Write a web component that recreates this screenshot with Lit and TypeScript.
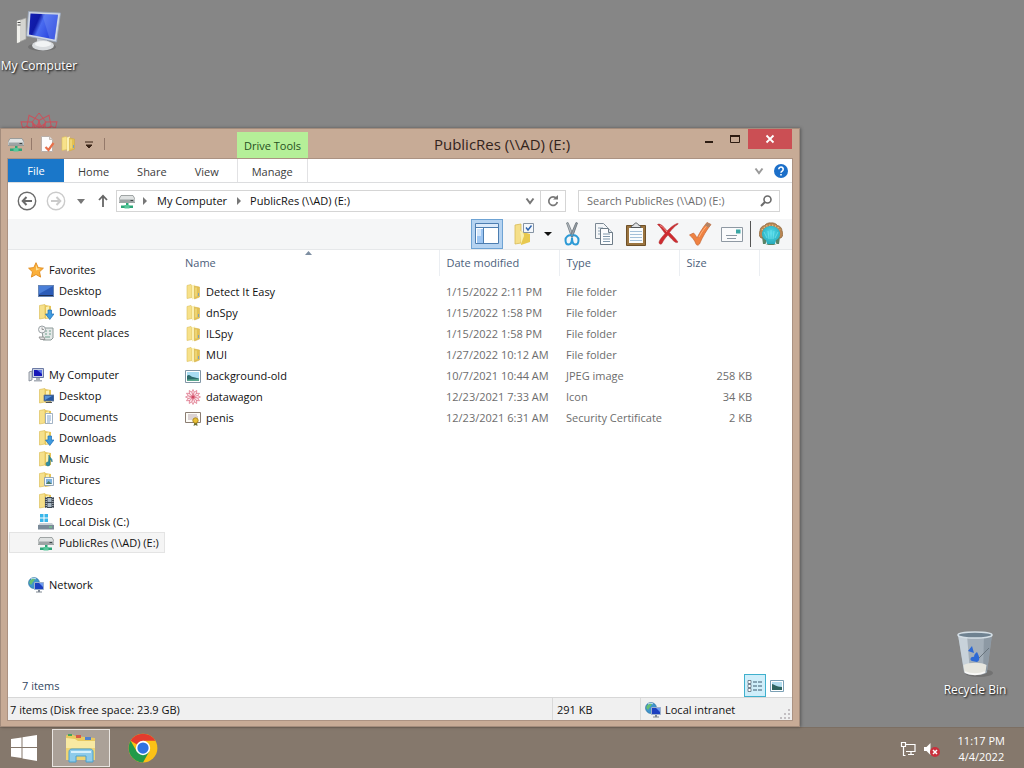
import { LitElement, html, svg, css, TemplateResult } from 'lit';
import { customElement, property, state } from 'lit/decorators.js';
import { classMap } from 'lit/directives/class-map.js';

interface TreeItem {
  label: string;
  icon: string;
  children?: TreeItem[];
}

interface FileEntry {
  name: string;
  icon: string;
  modified: string;
  type: string;
  size?: string;
}

const TREE: TreeItem[] = [
  {
    label: 'Favorites',
    icon: 'star',
    children: [
      { label: 'Desktop', icon: 'screen' },
      { label: 'Downloads', icon: 'downloads' },
      { label: 'Recent places', icon: 'recent' },
    ],
  },
  {
    label: 'My Computer',
    icon: 'pc',
    children: [
      { label: 'Desktop', icon: 'folder-desktop' },
      { label: 'Documents', icon: 'documents' },
      { label: 'Downloads', icon: 'downloads' },
      { label: 'Music', icon: 'music' },
      { label: 'Pictures', icon: 'pictures' },
      { label: 'Videos', icon: 'videos' },
      { label: 'Local Disk (C:)', icon: 'disk' },
      { label: 'PublicRes (\\\\AD) (E:)', icon: 'netdrive' },
    ],
  },
  { label: 'Network', icon: 'network' },
];

const FILES: FileEntry[] = [
  { name: 'Detect It Easy', icon: 'folder', modified: '1/15/2022 2:11 PM', type: 'File folder' },
  { name: 'dnSpy', icon: 'folder', modified: '1/15/2022 1:58 PM', type: 'File folder' },
  { name: 'ILSpy', icon: 'folder', modified: '1/15/2022 1:58 PM', type: 'File folder' },
  { name: 'MUI', icon: 'folder', modified: '1/27/2022 10:12 AM', type: 'File folder' },
  { name: 'background-old', icon: 'image', modified: '10/7/2021 10:44 AM', type: 'JPEG image', size: '258 KB' },
  { name: 'datawagon', icon: 'rosette', modified: '12/23/2021 7:33 AM', type: 'Icon', size: '34 KB' },
  { name: 'penis', icon: 'certificate', modified: '12/23/2021 6:31 AM', type: 'Security Certificate', size: '2 KB' },
];

const smallFolder = svg`
  <path d="M1.500 1.500l5.500-1v13.500l-5.500 1z" fill="#f6e08a" stroke="#d9b84e" stroke-width=".6"/>
  <path d="M7 1l6 1v12l-6 1z" fill="#e6c458"/>
  <path d="M8 3l3-.8v11l-3 .8z" fill="#fbf0b0"/>`;

const petals = (n: number, w: number, h: number) =>
  Array.from({ length: n }, (_, i) => svg`
    <path d="M0 0L${w} ${-h * 0.6}L0 ${-h}L${-w} ${-h * 0.6}z" transform="rotate(${(i * 360) / n})"/>`);

const ICONS: Record<string, TemplateResult> = {
  folder: svg`
    <path d="M2 1.500l4-1 1 1v12l-5 1z" fill="#f7e18a" stroke="#dcbf5c" stroke-width=".6"/>
    <path d="M7 1.500l3-1v13.500l-3 1.500z" fill="#fbf0b4"/>
    <path d="M9.500 2l5 1v10l-5 2z" fill="#e3c153" stroke="#cfa93c" stroke-width=".5"/>
    <path d="M11 3.500v9" stroke="#f7e795"/>
    <path d="M13.500 9v3" stroke="#7aa0c0"/>`,
  star: svg`
    <path d="M8 .7l2.200 4.900 5.200.6-3.900 3.600 1.100 5.300L8 12.500l-4.600 2.600 1.100-5.300L.6 6.200l5.200-.6z" fill="#fbb03b" stroke="#e08a1c" stroke-width=".9"/>
    <path d="M8 3l1.400 3.400 3.100.4L8 8.500z" fill="#ffe39a"/>`,
  screen: svg`
    <path d="M0 2h16v12H0z" fill="#6685b5"/>
    <path d="M1 3h14v9H1z" fill="#2c5cb8"/>
    <path d="M1 3h14L1 11z" fill="#4a7fd8"/>
    <path d="M1 12.500h14" stroke="#1d2f55"/>`,
  downloads: svg`${smallFolder}
    <path d="M10 6h3.500v4H16l-4.200 5.500L7.500 10H10z" fill="#3f9be0" stroke="#1d6db4" stroke-width=".7"/>`,
  recent: svg`
    <path d="M4 3h11v10l-2 2H5z" fill="#e4e9e8" stroke="#8e9a98"/>
    <path d="M7 6h2m2 0h2M7 9h2m2 0h2M7 12h5" stroke="#6fa08c"/>
    <circle cx="4" cy="4.500" r="3.500" fill="#f4f4f4" stroke="#9aa1a4"/>
    <path d="M4 2.500v2h2M1 12h5l1 2.500H2.500z" stroke="#888" fill="#dcdcdc" stroke-width=".8"/>`,
  pc: svg`
    <path d="M1 5l3-1v9l-3 1z" fill="#d7dbe0" stroke="#7b8490" stroke-width=".8"/>
    <path d="M4.500 1.500h11v9h-11z" fill="#c9d1e4" stroke="#6d7ba5"/>
    <path d="M6 3h8v6H6z" fill="#1717b8"/>
    <path d="M9 3h5v4z" fill="#5a73e8"/>
    <path d="M8 11h4v2h2v1.500H6V13h2z" fill="#a9afb8"/>`,
  'folder-desktop': svg`${smallFolder}
    <path d="M6 7h10v6H6z" fill="#27569f" stroke="#6c7f96" stroke-width=".8"/>
    <path d="M7 8h7l-7 4z" fill="#5a93d6"/>
    <path d="M8 14.500h6" stroke="#555"/>`,
  documents: svg`${smallFolder}
    <path d="M7.500 4.500h7v10h-7z" fill="#fff" stroke="#8aa0b6" stroke-width=".8"/>
    <path d="M9 7h4M9 9h4M9 11h4M9 13h3" stroke="#5b8bc0" stroke-width=".8"/>`,
  music: svg`${smallFolder}
    <path d="M11 4c0 3 4 3 3 7-.5-2-1.500-2.500-2-2.500V13a2 2 0 1 1-1.500-2z" fill="#2f8fa5" stroke="#1d6d80" stroke-width=".6"/>`,
  pictures: svg`${smallFolder}
    <path d="M6.500 5.500h9v8h-9z" fill="#f3f8fc" stroke="#7d96ad" stroke-width=".8"/>
    <path d="M8 7h6v5H8z" fill="#7fb3e0"/>
    <path d="M8 12l2.500-3 3.500 3z" fill="#4c7a62"/>`,
  videos: svg`${smallFolder}
    <path d="M7 4h9v11H7z" fill="#3a4450"/>
    <path d="M9.500 5h4v4h-4zM9.500 10h4v4h-4z" fill="#a8b8c4"/>
    <path d="M8.200 4v11M14.900 4v11" stroke="#d9dee2" stroke-dasharray="1 1"/>`,
  disk: svg`
    <path d="M2 0h3.500v3.500H2zM6.500 0H10v3.500H6.500zM2 4.500h3.500V8H2zM6.500 4.500H10V8H6.500z" fill="#38b6ea"/>
    <path d="M2 9h12l2 2.500H0z" fill="#c9d0d6"/>
    <path d="M0 11h16v4.500H0z" fill="#7a8a98"/>
    <path d="M11 13h3" stroke="#6fe08b"/>`,
  netdrive: svg`
    <path d="M2 2.500h12l2 3.500v3.500H0V6z" fill="#dfe2e2" stroke="#8b9292" stroke-width=".8"/>
    <path d="M1 6.500h14v2.500H1z" fill="#9da4a5"/>
    <path d="M11.500 7.500h2.500" stroke="#3c4444"/>
    <path d="M7 10h2.500v2.500H14V15H2v-2.500h5z" fill="#2da678"/>
    <path d="M5.500 12h5v3.500h-5z" fill="#57c79a"/>`,
  network: svg`
    <circle cx="6" cy="6" r="5.500" fill="#3f94cc" stroke="#2a6f9c" stroke-width=".6"/>
    <path d="M2 3.500c2-2 4-2 5-1L5 5 3 8 1.200 6zM7 7l3-2v4L7 11z" fill="#66bf72"/>
    <path d="M3 2c2-1 4-1 5 0" stroke="#cfeaf5" fill="none"/>
    <path d="M6.500 5.500h9v7h-9z" fill="#1c3fc0" stroke="#9db0cc"/>
    <path d="M11 6h4v4z" fill="#6f9cf0"/>
    <path d="M10 13h2v1.500h2v1H8v-1h2z" fill="#7f8792"/>`,
  image: svg`
    <path d="M.5 2.500h15v12H.5z" fill="#fff" stroke="#8296a6"/>
    <path d="M2 4h12v9H2z" fill="#a9dcf2"/>
    <path d="M2 8c2-3 4 1 6 1l6 1.500V13H2z" fill="#2d6b6c"/>
    <path d="M2 11.500l12-.5v2H2z" fill="#5aa78e"/>`,
  rosette: svg`
    <g transform="translate(8 8)" fill="#fbe3e8" stroke="#d9637b" stroke-width=".6">${petals(12, 1.5, 7.5)}</g>
    <circle cx="8" cy="8" r="1.500" fill="#d24762"/>`,
  certificate: svg`
    <path d="M.5 2.500h15v10H.5z" fill="#fdfcf7" stroke="#8b7d72"/>
    <path d="M3 5h9M3 7h10M3 9h5" stroke="#b9a9b0"/>
    <path d="M9.500 12l-1 4 2-1 2 1-.5-4z" fill="#6a6e38"/>
    <circle cx="10.500" cy="10.500" r="2.700" fill="#e9bf35" stroke="#9c7b1a" stroke-width=".8"/>`,
  page: svg`
    <path d="M2.500.5h8l3 3v12h-11z" fill="#fdfdfd" stroke="#b9b0aa"/>
    <path d="M10.500.5v3h3" fill="#e6e2df" stroke="#b9b0aa" stroke-width=".8"/>
    <path d="M6.500 11l3 3 5-7" stroke="#e8704a" stroke-width="2.200" fill="none"/>`,
};

const icon = (name: string) => html`
  <svg class="icon" viewBox="0 0 16 16" width="16" height="16" aria-hidden="true">${ICONS[name]}</svg>`;

// toolbar glyphs, drawn on a 24px grid
const TOOLS: { label: string; art: TemplateResult }[] = [
  {
    label: 'Cut',
    art: svg`
      <path d="M6.500 1l1.500-.5 5.500 13-2 1.500z" fill="#b9c0c7" stroke="#70787f" stroke-width=".8"/>
      <path d="M17.500 1L16 .5l-5.500 13 2 1.500z" fill="#98a1a8" stroke="#646c73" stroke-width=".8"/>
      <path d="M11.500 13.500c-3-1-6 1.500-6 4.500s1.500 4.500 3 4.500c2.500 0 3.500-4 3.500-7 0 3 1 7 3.500 7 1.500 0 3-1.500 3-4.500s-3-5.500-6-4.500" fill="none" stroke="#2c9ad6" stroke-width="2"/>`,
  },
  {
    label: 'Copy',
    art: svg`
      <path d="M3.500 1.500h8l4 4v11h-12z" fill="#f4f6f8" stroke="#7b8894"/>
      <path d="M6 6h5M6 9h5M6 12h5" stroke="#8fa3b4"/>
      <path d="M8.500 6.500h8l4 4v12h-12z" fill="#fcfdfe" stroke="#6d7b87"/>
      <path d="M16.500 6.500v4h4" fill="#dde4ea" stroke="#6d7b87"/>
      <path d="M11 12h7M11 14.500h7M11 17h7M11 19.500h7" stroke="#7f97ab"/>`,
  },
  {
    label: 'Paste',
    art: svg`
      <path d="M2.500 3.500h19v20h-19z" fill="#9a7440" stroke="#6e5028"/>
      <path d="M5 6h14v15H5z" fill="#fafcfd"/>
      <path d="M6 9.500h12M6 12.500h12M6 15.500h12M6 18.500h12" stroke="#a4c0d8"/>
      <path d="M7 5.500c0-2 2-2 3-3 .5-2 3.500-2 4 0 1 1 3 1 3 3z" fill="#dfe1e3" stroke="#53575a"/>`,
  },
  {
    label: 'Delete',
    art: svg`
      <path d="M1.500 2.500c2-1.500 5.500 1 9.500 6.500 3-3 6-6 10-7.500 1.500-.3 1.500.4.5 1-3 2-5.500 4.500-8 8 3 3 5.500 5.500 8.500 9.500-1.500 1.500-3.500.5-10-7-3 3-4.500 5.500-6 8.500-1 1.500-3.500.5-3-1.500 1-3 3.500-5.500 6-8.500C6.500 8 4.500 5 1.500 2.500z" fill="#cf2b30" stroke="#a8383b" stroke-width=".5"/>
      <path d="M4 3.500c3 1 5 4 7 6.500" stroke="#ee9089" fill="none"/>`,
  },
  {
    label: 'Properties',
    art: svg`
      <path d="M1.500 13l4-2c2 2 2.500 3 3.500 5C12 10 15.500 4.500 19 .5l4 2C18.500 8 14.500 15 11.500 22c-1 1.500-3 1.500-3.500 0-1.500-4-3.500-6.500-6.500-9z" fill="#ef8242" stroke="#c4683a" stroke-width=".7"/>
      <path d="M11 15c3-6 6-9 9-12.500" stroke="#ffb27c" fill="none"/>
      <path d="M17 3.500l2-3 4 2-2.500 3z" fill="#b08468"/>`,
  },
  {
    label: 'Rename',
    art: svg`
      <path d="M1.500 5.500h21v14h-21z" fill="#fafbfc" stroke="#8f99a3"/>
      <path d="M16 7.500h4.500v4H16z" fill="#3aa6a4"/>
      <path d="M6 13.500h11M7 16.500h9" stroke="#8b97a3"/>`,
  },
];

const chevron = html`
  <svg width="10" height="8" viewBox="0 0 10 8" aria-hidden="true">
    <path d="M1.500 1.500L5 6l3.500-4.500" fill="none" stroke="currentColor" stroke-width="2"/>
  </svg>`;

const shared = css`
  * {
    box-sizing: border-box;
  }

  button {
    display: flex;
    align-items: center;
    justify-content: center;
    padding: 0;
    border: none;
    background: none;
    color: inherit;
    font: inherit;
    cursor: default;
  }

  a {
    color: inherit;
    text-decoration: none;
  }

  svg {
    display: block;
    flex: none;
  }
`;

@customElement('explorer-window')
export class ExplorerWindow extends LitElement {
  static styles = [shared, css`
    :host {
      display: flex;
      flex-direction: column;
      padding: 0 7px 6px;
      border: 1px solid #a38c7c;
      background: #c7ab96;
      box-shadow: 1px 0 3px rgba(0, 0, 0, 0.35);
      color: #111;
    }

    .titlebar {
      display: flex;
      height: 30px;
    }

    .quick {
      display: flex;
      align-items: center;
      flex: none;
      width: 229px;
      gap: 5px;
    }

    .quick .divider {
      width: 1px;
      height: 12px;
      margin: 0 2px;
      background: #94796a;
    }

    .context {
      flex: none;
      width: 71px;
      margin-top: 3px;
      padding-top: 5px;
      background: #b5ef98;
      color: #27501f;
      line-height: 18px;
      text-align: center;
    }

    .title {
      flex: 1;
      margin: 0;
      color: #33241c;
      font-size: 15px;
      font-weight: normal;
      line-height: 30px;
      text-align: center;
    }

    .caption {
      display: flex;
      align-items: flex-start;
    }

    .caption button {
      width: 26px;
      height: 20px;
    }

    .caption .close {
      width: 44px;
      background: #cb4f54;
    }

    .client {
      display: flex;
      flex: 1;
      flex-direction: column;
      min-height: 0;
      outline: 1px solid #ab9282;
      background: #fff;
    }

    .tabs {
      display: flex;
      flex: none;
      height: 24px;
      border-bottom: 1px solid #dcdddf;
      color: #3c3c3c;
    }

    .tab {
      padding: 2px 14px 0;
    }

    .tab.file {
      width: 56px;
      height: 23px;
      padding: 0;
      background: #1a77c9;
      color: #fff;
    }

    .tab.manage {
      width: 71px;
      margin-left: 4px;
      padding: 2px 0 0;
      border: solid #e2e2e4;
      border-width: 0 1px;
    }

    .tabs .fold {
      margin-left: auto;
      margin-right: 10px;
      color: #9a9a9a;
    }

    .tabs .help {
      margin-right: 4px;
    }

    .nav {
      display: flex;
      flex: none;
      align-items: center;
      height: 36px;
      padding: 0 12px 0 9px;
    }

    .nav .history {
      margin-left: 9px;
    }

    .nav .history:first-child {
      margin-left: 0;
    }

    .nav .recent {
      margin: 0 13px 0 11px;
    }

    .address,
    .search {
      display: flex;
      align-items: center;
      height: 22px;
      border: 1px solid #d5d5d5;
    }

    .address {
      flex: 1;
      margin: 0 12px 0 8px;
      padding-left: 2px;
    }

    .address .crumb {
      margin: 0 10px;
      color: #111;
    }

    .address .crumb:last-of-type {
      margin-left: 9px;
    }

    .address .open {
      width: 20px;
      height: 20px;
      margin-left: auto;
      color: #777;
    }

    .address .refresh {
      width: 25px;
      height: 20px;
      border-left: 1px solid #d5d5d5;
    }

    .search {
      width: 202px;
      padding: 0 7px 0 8px;
    }

    .search input {
      flex: 1;
      min-width: 0;
      padding: 0;
      border: none;
      outline: none;
      background: none;
      color: #333;
      font: inherit;
    }

    .search input::placeholder {
      color: #6d6d6d;
      opacity: 1;
    }

    .toolbar {
      display: flex;
      flex: none;
      align-items: flex-end;
      justify-content: flex-end;
      height: 31px;
      padding: 0 5px;
      border-bottom: 1px solid #e6e8ea;
      background: #f5f6f7;
    }

    .toolbar button {
      width: 32px;
      height: 30px;
    }

    .toolbar .pane {
      margin-right: 5px;
      border: 1px solid #6ea3d4;
      background: #b5d3f1;
    }

    .toolbar .more {
      width: 16px;
    }

    .toolbar .divider {
      width: 1px;
      height: 26px;
      margin: 0 4px 2px 2px;
      background: #555;
    }

    .body {
      display: flex;
      flex: 1;
      min-height: 0;
    }

    .tree {
      flex: none;
      width: 157px;
      padding-top: 9px;
      overflow: hidden;
      white-space: nowrap;
    }

    .tree ul {
      margin: 0;
      padding: 0;
      list-style: none;
    }

    .tree .group {
      margin-bottom: 21px;
    }

    .tree a {
      display: flex;
      align-items: center;
      gap: 5px;
      height: 21px;
      margin-left: 1px;
      padding-left: 18px;
      border: 1px solid transparent;
    }

    .tree ul ul a {
      padding-left: 28px;
    }

    .tree a.selected {
      border-color: #e4e4e4;
      background: #f5f5f5;
    }

    .files {
      flex: 1;
      padding-left: 13px;
    }

    table {
      width: 100%;
      border-collapse: collapse;
      table-layout: fixed;
    }

    th,
    td {
      padding: 0 7px;
      color: #6d6d6d;
      font-weight: normal;
      text-align: left;
      white-space: nowrap;
    }

    th {
      position: relative;
      height: 26px;
      border-right: 1px solid #ebeef2;
      color: #4c607a;
    }

    th:last-child {
      border-right: none;
    }

    th .sort {
      position: absolute;
      top: 1px;
      left: calc(50% - 3px);
    }

    thead::after {
      content: '';
      display: block;
      height: 5px;
    }

    td {
      height: 21px;
    }

    td.number {
      text-align: right;
    }

    .name {
      display: flex;
      align-items: center;
      gap: 5px;
      color: #111;
    }

    .col-name {
      width: 261px;
    }

    .col-text {
      width: 120px;
    }

    .col-size {
      width: 80px;
    }

    .details {
      display: flex;
      flex: none;
      align-items: center;
      height: 23px;
      padding: 0 4px 0 14px;
      color: #33475f;
    }

    .details .view {
      width: 22px;
      height: 23px;
    }

    .details .view.on {
      margin-left: auto;
      border: 1px solid #3fb0cd;
      background: #cfeefa;
    }

    .status {
      display: grid;
      flex: none;
      grid-template-columns: 1fr 88px 152px;
      height: 23px;
      border-top: 1px solid #d7d7d7;
      background: #f0f0f0;
    }

    .status div {
      display: flex;
      align-items: center;
      gap: 4px;
      padding: 2px 4px 0;
      border-left: 1px solid #d9d9d9;
    }

    .status div:first-child {
      padding-left: 2px;
      border-left: none;
    }

    .status .grip {
      align-self: flex-end;
      margin: 0 -2px 1px auto;
    }
  `];

  @property()
  heading = '';

  @state()
  private current = 'PublicRes (\\\\AD) (E:)';

  private select(e: Event, item: TreeItem) {
    e.preventDefault();
    this.current = item.label;
  }

  private renderNode(item: TreeItem): TemplateResult {
    return html`
      <li class=${classMap({ group: !!item.children })}>
        <a href="#" class=${classMap({ selected: this.current === item.label })}
           @click=${(e: Event) => this.select(e, item)}>${icon(item.icon)}<span>${item.label}</span></a>
        ${item.children ? html`<ul>${item.children.map(child => this.renderNode(child))}</ul>` : ''}
      </li>`;
  }

  private renderTitlebar() {
    return html`
      <header class="titlebar">
        <div class="quick">
          ${icon('netdrive')}
          <span class="divider"></span>
          <button aria-label="Properties">${icon('page')}</button>
          <button aria-label="New folder">${icon('folder')}</button>
          <button aria-label="Customize Quick Access Toolbar">
            <svg width="16" height="16" viewBox="0 0 16 16">
              <path d="M4 6h8M5 9h6l-3 3z" fill="#3a2417" stroke="#3a2417"/>
            </svg>
          </button>
          <span class="divider"></span>
        </div>
        <div class="context">Drive Tools</div>
        <h1 class="title">${this.heading}</h1>
        <div class="caption">
          <button aria-label="Minimize">
            <svg width="12" height="12" viewBox="0 0 12 12"><path d="M2 8h8v2H2z" fill="#2d1c12"/></svg>
          </button>
          <button aria-label="Maximize">
            <svg width="12" height="12" viewBox="0 0 12 12">
              <path d="M1.500 2.500h9v7h-9z" fill="none" stroke="#2d1c12"/><path d="M1 2h10v2H1z" fill="#2d1c12"/>
            </svg>
          </button>
          <button class="close" aria-label="Close">
            <svg width="10" height="10" viewBox="0 0 10 10">
              <path d="M1.500 1.500l7 7M8.500 1.500l-7 7" stroke="#fff" stroke-width="1.800"/>
            </svg>
          </button>
        </div>
      </header>`;
  }

  private renderRibbon() {
    return html`
      <div class="tabs">
        <button class="tab file">File</button>
        <button class="tab">Home</button>
        <button class="tab">Share</button>
        <button class="tab">View</button>
        <button class="tab manage">Manage</button>
        <button class="fold" aria-label="Expand the Ribbon">${chevron}</button>
        <button class="help" aria-label="Help">
          <svg width="14" height="14" viewBox="0 0 14 14">
            <circle cx="7" cy="7" r="7" fill="#1c6fc9"/>
            <path d="M4.800 5.300a2.200 2.200 0 1 1 3.400 1.800c-.9.600-1.200.9-1.200 1.700M7 10v1.600" fill="none" stroke="#fff" stroke-width="1.600"/>
          </svg>
        </button>
      </div>`;
  }

  private renderNavigation() {
    return html`
      <div class="nav">
        <button class="history" aria-label="Back">
          <svg width="20" height="20" viewBox="0 0 20 20" fill="none" stroke="#6b6b6b">
            <circle cx="10" cy="10" r="8.700" stroke-width="1.400"/>
            <path d="M15 10H6M9.500 6L5.700 10l3.800 4" stroke-width="2"/>
          </svg>
        </button>
        <button class="history" aria-label="Forward">
          <svg width="20" height="20" viewBox="0 0 20 20" fill="none" stroke="#cbcbcb">
            <circle cx="10" cy="10" r="8.700" stroke-width="1.400"/>
            <path d="M5 10h9M10.500 6l3.800 4-3.800 4" stroke-width="2"/>
          </svg>
        </button>
        <button class="recent" aria-label="Recent locations">
          <svg width="8" height="5" viewBox="0 0 8 5"><path d="M0 0h8L4 5z" fill="#777"/></svg>
        </button>
        <button aria-label="Up">
          <svg width="10" height="14" viewBox="0 0 10 14">
            <path d="M5 13V2M1 6l4-4.300L9 6" fill="none" stroke="#666" stroke-width="1.800"/>
          </svg>
        </button>
        <div class="address">
          ${icon('netdrive')}
          <svg width="12" height="8" viewBox="0 0 12 8"><path d="M8 0l4 4-4 4z" fill="#777"/></svg>
          <a class="crumb" href="#">My Computer</a>
          <svg width="4" height="8" viewBox="0 0 4 8"><path d="M0 0l4 4-4 4z" fill="#777"/></svg>
          <a class="crumb" href="#">${this.heading}</a>
          <button class="open" aria-label="Previous locations">${chevron}</button>
          <button class="refresh" aria-label="Refresh">
            <svg width="12" height="12" viewBox="0 0 12 12">
              <path d="M9.500 3.500A4.300 4.300 0 1 0 10.300 7" fill="none" stroke="#777" stroke-width="1.700"/>
              <path d="M6 4.500h5V0z" fill="#777"/>
            </svg>
          </button>
        </div>
        <label class="search">
          <input type="text" aria-label="Search" placeholder="Search ${this.heading}">
          <svg width="12" height="12" viewBox="0 0 12 12">
            <circle cx="7.500" cy="4.500" r="3.500" fill="none" stroke="#6b6b6b" stroke-width="1.600"/>
            <path d="M5 7L1 11" stroke="#6b6b6b" stroke-width="2"/>
          </svg>
        </label>
      </div>`;
  }

  private renderToolbar() {
    return html`
      <div class="toolbar">
        <button class="pane" aria-label="Navigation pane">
          <svg width="24" height="24" viewBox="0 0 24 24">
            <path d="M.5 1.500h23v20H.5z" fill="#fff" stroke="#4c7db0"/>
            <path d="M1 2h22v3H1z" fill="#dceafa"/>
            <path d="M1 5.500h22M8.500 6v15" stroke="#4c7db0"/>
            <path d="M2 7h6v14H2z" fill="#9cc5f2"/>
            <path d="M2 7h4v7H2z" fill="#d4e6fa"/>
          </svg>
        </button>
        <button aria-label="Select">
          <svg width="24" height="24" viewBox="0 0 24 24">
            <path d="M3 3l6-1v19l-6 1z" fill="#f5df8a" stroke="#d8bb55" stroke-width=".8"/>
            <path d="M8 9l10 3v8l-9 3z" fill="#e8c94f"/>
            <path d="M8 9c3 0 4 3 4 5l-3 8z" fill="#fbf0b0"/>
            <path d="M11.500 1.500h10v9h-10z" fill="#f4f7fb" stroke="#8593a3"/>
            <path d="M14 5.500l2 2.500 3.500-4.500" fill="none" stroke="#2d63ad" stroke-width="1.400"/>
          </svg>
        </button>
        <button class="more" aria-label="More options">
          <svg width="8" height="4" viewBox="0 0 8 4"><path d="M0 0h8L4 4z" fill="#111"/></svg>
        </button>
        ${TOOLS.map(tool => html`
          <button aria-label=${tool.label}>
            <svg width="24" height="24" viewBox="0 0 24 24">${tool.art}</svg>
          </button>
        `)}
        <span class="divider"></span>
        <button aria-label="Shell options">
          <svg width="24" height="24" viewBox="0 0 24 24">
            <defs>
              <radialGradient id="pearl" cx="0.5" cy="0.4" r="0.7">
                <stop offset="0" stop-color="#52dcec"/>
                <stop offset="1" stop-color="#1fa3b4"/>
              </radialGradient>
            </defs>
            <path d="M2 16C0 14-.5 11 1 9c0-3 2-5 4.500-5.500C7 1.500 10 .5 12 1c2-.5 5 .5 6.500 2.500C21 4 23 6 23 9c1.500 2 1 5-1 7z" fill="#b98552" stroke="#8f6d45" stroke-width=".8"/>
            <path d="M3 15l5 3-1.500 4 3 1h5l3-1L16 18l5-3-1 7h-4l-2-1h-4l-2 1H4z" fill="#5a8467"/>
            <path d="M7 18c-3-1-4.500-4-4-7.500C4 6.500 8 4 12 4s8 2.500 9 6.500c.5 3.500-1 6.500-4 7.500l-1 4H8z" fill="url(#pearl)"/>
            <path d="M3 8l2-2.500 3.500-2L12 3l3.500.5 3.500 2L21 8" fill="none" stroke="#e6cf9a" stroke-width="1.200" stroke-dasharray="1 2"/>
            <path d="M8 16L5 10M10 17L9 9M12 17V8M14 17l1-8M16 16l3-6" stroke="#7fe9f2" stroke-width=".6"/>
          </svg>
        </button>
      </div>`;
  }

  private renderFiles() {
    return html`
      <main class="files">
        <table>
          <colgroup>
            <col class="col-name"><col class="col-text"><col class="col-text"><col class="col-size"><col>
          </colgroup>
          <thead>
            <tr>
              <th>Name
                <svg class="sort" width="7" height="4" viewBox="0 0 7 4"><path d="M0 4h7L3.500 0z" fill="#7d8ea1"/></svg>
              </th>
              <th>Date modified</th>
              <th>Type</th>
              <th>Size</th>
              <th></th>
            </tr>
          </thead>
          <tbody>
            ${FILES.map(file => html`
              <tr>
                <td><span class="name">${icon(file.icon)}${file.name}</span></td>
                <td>${file.modified}</td>
                <td>${file.type}</td>
                <td class="number">${file.size ?? ''}</td>
              </tr>
            `)}
          </tbody>
        </table>
      </main>`;
  }

  render() {
    return html`
      ${this.renderTitlebar()}
      <div class="client">
        ${this.renderRibbon()}
        ${this.renderNavigation()}
        ${this.renderToolbar()}
        <div class="body">
          <nav class="tree"><ul>${TREE.map(item => this.renderNode(item))}</ul></nav>
          ${this.renderFiles()}
        </div>
        <div class="details">
          <span>${FILES.length} items</span>
          <button class="view on" aria-label="Details view">
            <svg width="16" height="14" viewBox="0 0 16 14">
              <path d="M1 1.500h3v3H1zM1 5.500h3v3H1zM1 9.500h3v3H1z" fill="#fff" stroke="#5d6c7b" stroke-width=".8"/>
              <path d="M6 3h4m1 0h4M6 7h4m1 0h4M6 11h4m1 0h4" stroke="#3c5a70"/>
            </svg>
          </button>
          <button class="view" aria-label="Large icons view">
            <svg width="14" height="12" viewBox="0 0 14 12">
              <path d="M.5.5h13v11H.5z" fill="#fff" stroke="#7ba0b5"/>
              <path d="M2 2h10v8H2z" fill="#b4def0"/>
              <path d="M2 4c2 0 4 3 10 3v3H2z" fill="#2f6460"/>
            </svg>
          </button>
        </div>
        <footer class="status">
          <div>${FILES.length} items (Disk free space: 23.9 GB)</div>
          <div>291 KB</div>
          <div>
            ${icon('network')}Local intranet
            <svg class="grip" width="10" height="10" viewBox="0 0 10 10">
              <path d="M8 0h2v2H8zM4 4h2v2H4zM8 4h2v2H8zM0 8h2v2H0zM4 8h2v2H4zM8 8h2v2H8z" fill="#c3bfc2"/>
            </svg>
          </div>
        </footer>
      </div>`;
  }
}

@customElement('app-root')
export class AppRoot extends LitElement {
  static styles = [shared, css`
    :host {
      display: flex;
      flex-direction: column;
      height: 100vh;
      overflow: hidden;
      background: #868686;
      font-family: 'Open Sans', 'Noto Sans', sans-serif;
      font-size: 11px;
      line-height: 16px;
    }

    .desktop {
      position: relative;
      flex: 1;
    }

    /* icons and windows sit freely on the desktop */
    .shortcut {
      position: absolute;
      display: flex;
      flex-direction: column;
      align-items: center;
      width: 78px;
      color: #fff;
      font-size: 12px;
      text-shadow: 1px 1px 2px #000;
      white-space: nowrap;
    }

    .shortcut.computer {
      top: 8px;
      left: 0;
    }

    .shortcut.wagon {
      top: 112px;
      left: 0;
    }

    .shortcut.bin {
      right: 10px;
      bottom: 29px;
    }

    .shortcut svg {
      margin-bottom: 2px;
    }

    explorer-window {
      position: absolute;
      top: 128px;
      right: 224px;
      bottom: 0;
      left: 0;
    }

    .taskbar {
      display: flex;
      flex: none;
      align-items: center;
      height: 41px;
      border-top: 1px solid #7c6f63;
      background: #85786c;
      color: #fff;
    }

    .taskbar .start {
      width: 48px;
      height: 38px;
    }

    .taskbar .task {
      width: 58px;
      height: 38px;
      margin-left: 4px;
    }

    .taskbar .task.active {
      border: 1px solid #e9e5e1;
      background: #aba198;
    }

    .tray {
      display: flex;
      align-items: center;
      gap: 8px;
      margin-left: auto;
      padding: 2px 19px 0 0;
    }

    .clock {
      margin-left: 10px;
      text-align: center;
    }
  `];

  render() {
    return html`
      <div class="desktop">
        <a class="shortcut computer" href="#">
          <svg width="48" height="48" viewBox="0 0 48 48" aria-hidden="true">
            <defs>
              <linearGradient id="glass" x1="0" y1="0" x2="1" y2="0.4">
                <stop offset="0" stop-color="#1420b4"/>
                <stop offset="0.35" stop-color="#0f1aa6"/>
                <stop offset="0.5" stop-color="#4a6cf0"/>
                <stop offset="1" stop-color="#2540dc"/>
              </linearGradient>
            </defs>
            <ellipse cx="27" cy="39" rx="14" ry="4" fill="#5e5e5e" opacity=".5"/>
            <path d="M2 13l9-3v21l-9 4z" fill="#d4d4d0" stroke="#a3a3a0" stroke-width=".7"/>
            <path d="M2 13l3-1v22l-3 1z" fill="#f0f0ec"/>
            <path d="M2.500 14.500h3M2.500 17h3" stroke="#4b4b4b"/>
            <path d="M22 30h10v6H22z" fill="#c7cbd0"/>
            <ellipse cx="28" cy="37.500" rx="11" ry="5" fill="#d9dcdf"/>
            <ellipse cx="28" cy="36" rx="8" ry="3" fill="#f2f4f5"/>
            <path d="M13.500 3.500l32 1.500-4 29-30-6z" fill="#cfd7e6" stroke="#98a4b8" stroke-width=".8"/>
            <path d="M15.500 5.500l27.500 1.200-3.500 24.800-25.500-5z" fill="url(#glass)"/>
            <path d="M27 6l16 .7-3.500 24.800-5-1z" fill="#7f9bf7" opacity=".35"/>
          </svg>
          My Computer
        </a>
        <a class="shortcut wagon" href="#" aria-label="datawagon">
          <svg width="48" height="48" viewBox="-24 -24 48 48">
            <g fill="none" stroke="#c9525c">${petals(14, 7, 23)}${petals(14, 3, 14)}</g>
          </svg>
        </a>
        <a class="shortcut bin" href="#">
          <svg width="48" height="50" viewBox="0 0 48 50" aria-hidden="true">
            <ellipse cx="28" cy="43" rx="14" ry="4" fill="#555" opacity=".4"/>
            <path d="M7 5l34 0-5 37c-1 4-22 4-23 0z" fill="#a9b6c2" opacity=".85"/>
            <path d="M7 5l9 0 3 38c-4 0-6-1-6-2z" fill="#d7e1e8" opacity=".7"/>
            <path d="M33 5h8l-5 36-4 2z" fill="#75838f" opacity=".5"/>
            <path d="M12.500 35c6-3 18-3 23 0l-1 7c-3 3-18 3-21 0z" fill="#e6e6df"/>
            <path d="M14 42c5 3 15 3 20 0" stroke="#f8f8f6" stroke-width="2" fill="none"/>
            <path d="M17 21l4-5 2 7zM21 31c-3-1-1-5 2-4 0-3 2-4 3-5 2 4 4 8 0 10z" fill="#2c69d6"/>
            <path d="M28 28l10-10" stroke="#69747d"/>
            <ellipse cx="24" cy="5" rx="17" ry="3" fill="#6f8291" stroke="#d5dfe6" stroke-width="1.500"/>
          </svg>
          Recycle Bin
        </a>
        <explorer-window heading="PublicRes (\\\\AD) (E:)"></explorer-window>
      </div>
      <footer class="taskbar">
        <button class="start" aria-label="Start">
          <svg width="28" height="26" viewBox="0 0 28 26">
            <path d="M1 4l10.500-1.500V12H1zM12.500 2.300L27 0v12H12.500zM1 13h10.500v10L1 21.500zM12.500 13H27v13l-14.500-2.500z" fill="#fff"/>
          </svg>
        </button>
        <button class="task active" aria-label="File Explorer">
          <svg width="32" height="30" viewBox="0 0 32 30">
            <path d="M1 3c0-2 8-2 9 0l20 2v22H1z" fill="#e8c860"/>
            <path d="M3 1h4v2H3z" fill="#46a55b"/>
            <path d="M11 2h5v3h-5z" fill="#d65a48"/>
            <path d="M20 4h6v3h-6z" fill="#5182cc"/>
            <path d="M1 5l9 1 3 2h17v19H1z" fill="#f8e9a2"/>
            <path d="M1 15h29v12H1z" fill="#efd473"/>
            <path d="M4 29V19c0-2 1-3 3-3h18c2 0 3 1 3 3v10h-7v-6H11v6z" fill="#8ecbea" stroke="#4ba0cc"/>
            <path d="M6 19h20" stroke="#d7f0fb" stroke-width="2"/>
          </svg>
        </button>
        <button class="task" aria-label="Google Chrome">
          <svg width="30" height="30" viewBox="0 0 48 48">
            <circle cx="24" cy="24" r="23" fill="#fbc116"/>
            <path d="M24 24L4.100 12.500A23 23 0 0 1 43.900 12.500H24z" fill="#e33b2e"/>
            <path d="M4.100 12.500A23 23 0 0 0 24 47l10-17.300L24 24l-10 5.700z" fill="#229a4a"/>
            <circle cx="24" cy="24" r="11.500" fill="#fff"/>
            <circle cx="24" cy="24" r="9" fill="#2f73e0"/>
          </svg>
        </button>
        <div class="tray">
          <svg width="16" height="16" viewBox="0 0 16 16" role="img" aria-label="Network">
            <path d="M6 3.500h9v7H6M8 13.500h6M11 11v2M1.500 1.500h4v4h-4zM3.500 6v8.500h2" fill="none" stroke="#fff" stroke-width="1.200"/>
          </svg>
          <svg width="16" height="16" viewBox="0 0 16 16" role="img" aria-label="Volume muted">
            <path d="M0 6h2.500L6.500 2v12l-4-4H0z" fill="#fff"/>
            <circle cx="11" cy="11" r="5" fill="#c9303c"/>
            <path d="M9 9l4 4M13 9l-4 4" stroke="#fff" stroke-width="1.500"/>
          </svg>
          <div class="clock">11:17 PM<br>4/4/2022</div>
        </div>
      </footer>`;
  }
}

declare global {
  interface HTMLElementTagNameMap {
    'app-root': AppRoot;
    'explorer-window': ExplorerWindow;
  }
}
